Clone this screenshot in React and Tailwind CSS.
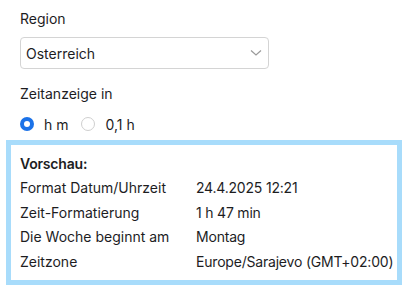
export default function App() {
  const rows = [
    ["Format Datum/Uhrzeit", "24.4.2025 12:21"],
    ["Zeit-Formatierung", "1 h 47 min"],
    ["Die Woche beginnt am", "Montag"],
    ["Zeitzone", "Europe/Sarajevo (GMT+02:00)"],
  ];

  return (
    <div className="h-[294px] w-[416px] overflow-hidden bg-white font-['Inter',sans-serif] text-[14px] text-[#1d1d1f]">
      <div className="px-5 pt-[9px]">
        <div className="leading-[20px]">Region</div>

        {/* select */}
        <div className="mt-[8px] flex h-[32px] w-[249px] items-center justify-between rounded-[4px] border border-[#d4d4d4] pl-[5px] pr-[6px]">
          <span>Osterreich</span>
          <svg width="12" height="8" viewBox="0 0 12 8" fill="none">
            <path d="M1 1.5l5 4.5 5-4.5" stroke="#9a9a9a" strokeWidth="1.2" />
          </svg>
        </div>

        <div className="mt-[15px] leading-[20px]">Zeitanzeige in</div>

        {/* radios */}
        <div className="mt-[10px] flex h-[20px] items-center">
          <span className="flex h-[14px] w-[14px] items-center justify-center rounded-full bg-[#1b72e8]">
            <span className="h-[6px] w-[6px] rounded-full bg-white" />
          </span>
          <span className="ml-[10px]">h m</span>
          <span className="ml-[13px] h-[14px] w-[14px] rounded-full border border-[#cfcfcf]" />
          <span className="ml-[10px]">0,1 h</span>
        </div>
      </div>

      {/* Vorschau */}
      <div className="mx-[6px] mt-[6px] h-[145px] w-[396px] border-[5px] border-[#a8dcfb] px-[9px] pt-[6px]">
        <div className="font-semibold leading-[25px] tracking-[-0.2px]">Vorschau:</div>
        {rows.map(([label, value]) => (
          <div key={label} className="flex whitespace-nowrap leading-[24.5px]">
            <span className="w-[176px] shrink-0">{label}</span>
            <span className="tracking-[-0.2px]">{value}</span>
          </div>
        ))}
      </div>
    </div>
  );
}
